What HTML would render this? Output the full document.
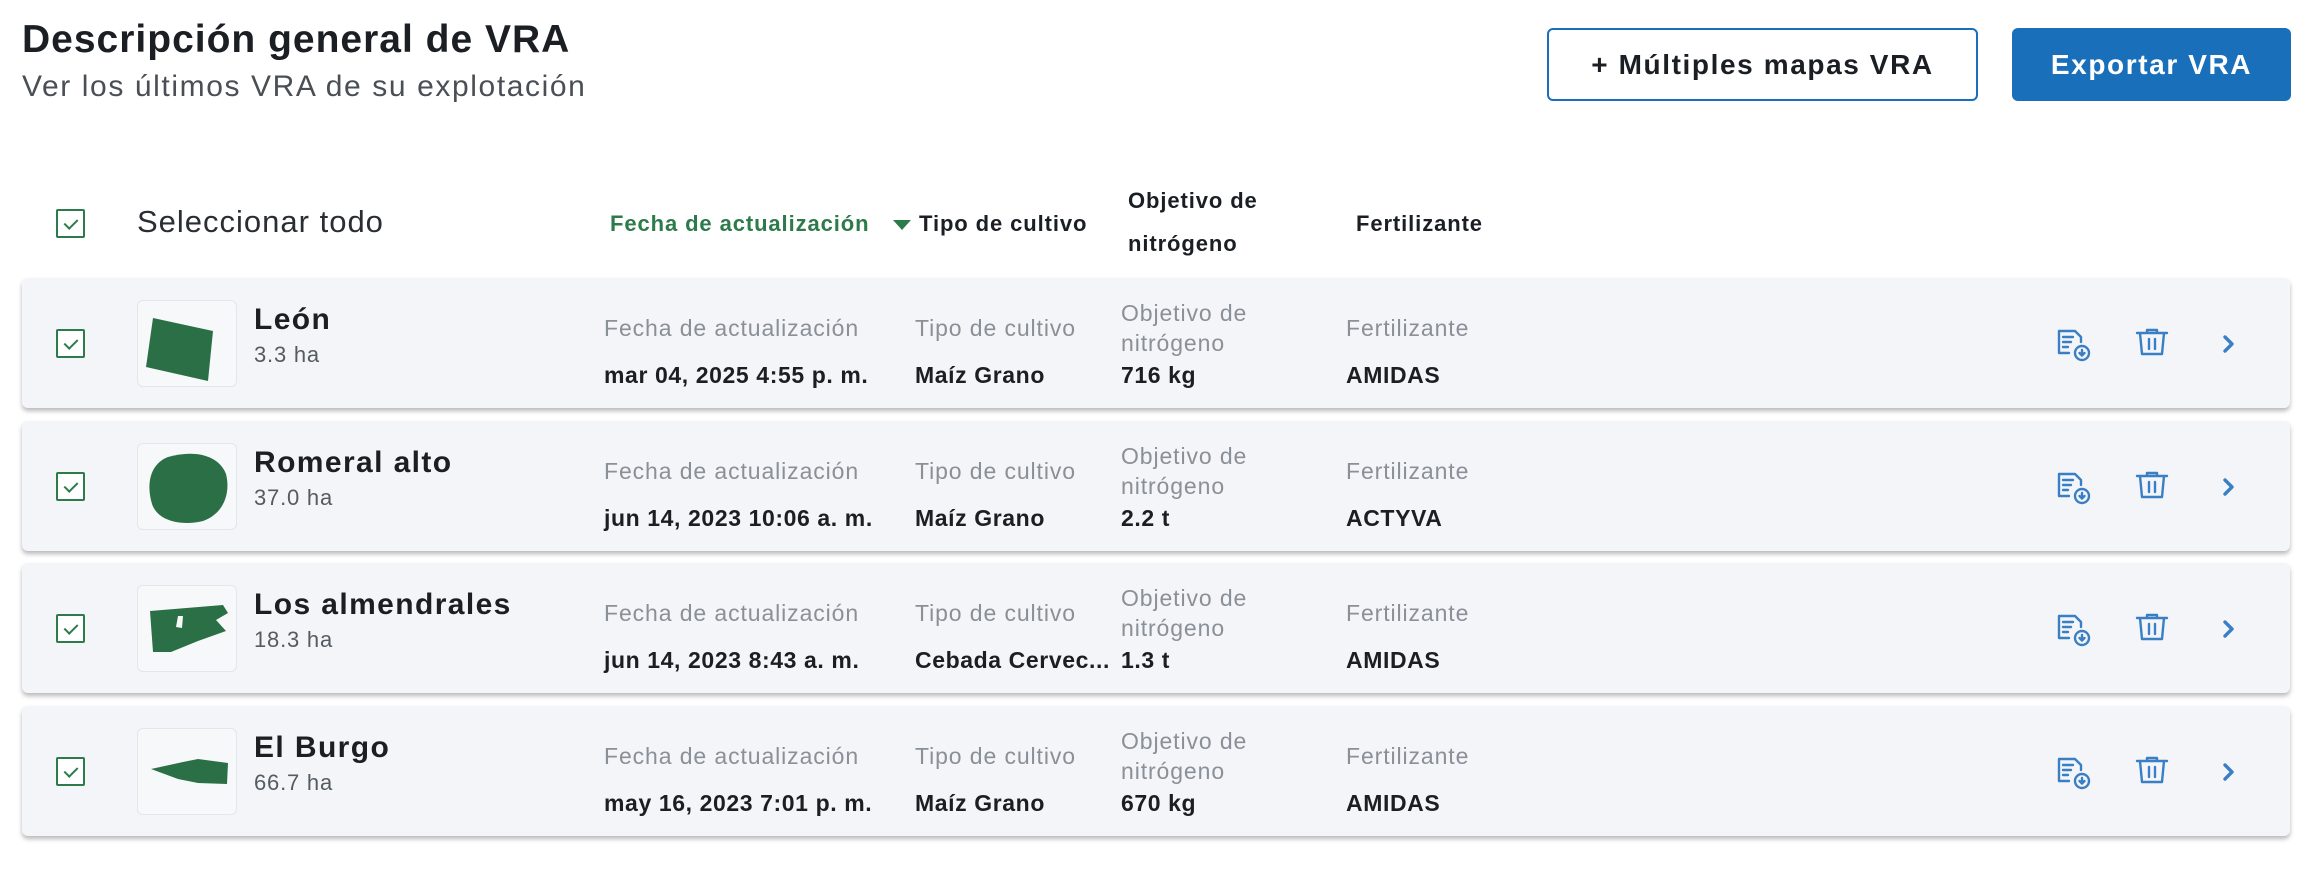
<!DOCTYPE html>
<html><head><meta charset="utf-8"><style>
*{box-sizing:border-box;margin:0;padding:0}
body{width:2306px;height:874px;background:#fff;font-family:"Liberation Sans",sans-serif;color:#1b1f24;position:relative;overflow:hidden}
.a{position:absolute;white-space:nowrap}
.title{left:22px;top:18px;font-size:39px;font-weight:bold;letter-spacing:1px}
.sub{left:22px;top:70px;font-size:30px;color:#4a4f55;letter-spacing:1.6px}
.btn{position:absolute;top:28px;height:73px;border-radius:6px;font-size:28px;font-weight:bold;display:flex;align-items:center;justify-content:center;letter-spacing:1.6px}
.b1{left:1547px;width:431px;border:2px solid #1a6fba;color:#1b1f24;background:#fff}
.b2{left:2012px;width:279px;background:#1a6fba;color:#fff}
.cb{position:absolute;width:29px;height:29px;border:2px solid #2d7a4a;border-radius:2px;background:#fff}
.cb:after{content:"";position:absolute;left:9px;top:5px;width:6px;height:11px;border:solid #2d7a4a;border-width:0 2px 2px 0;transform:rotate(45deg)}
.hd{font-size:22px;font-weight:bold;letter-spacing:0.9px}
.card{position:absolute;left:22px;width:2268px;height:130px;background:#f3f5f8;border-radius:6px;box-shadow:0 3px 5px rgba(0,0,0,.28)}
.thumb{position:absolute;left:115px;top:22px;width:100px;height:87px;background:#f7f8fa;border:1px solid #e3e6ea;border-radius:6px}
.nm{left:232px;top:25px;font-size:30px;font-weight:bold;letter-spacing:1.4px}
.ha{left:232px;top:64px;font-size:22px;color:#555b62;letter-spacing:0.8px}
.lb{font-size:23px;color:#8a9097;letter-spacing:0.9px}
.vl{font-size:23px;font-weight:bold;top:84px;letter-spacing:0.6px}
</style></head><body>
<div class="a title">Descripción general de VRA</div>
<div class="a sub">Ver los últimos VRA de su explotación</div>
<div class="btn b1">+ Múltiples mapas VRA</div>
<div class="btn b2">Exportar VRA</div>

<div class="cb" style="left:56px;top:209px"></div>
<div class="a" style="left:137px;top:204px;font-size:31px;color:#2a2e33;letter-spacing:1px">Seleccionar todo</div>
<div class="a hd" style="left:610px;top:211px;color:#2d7a4a">Fecha de actualización</div>
<svg class="a" style="left:892px;top:219px" width="20" height="12"><path d="M1 1h18l-9 10z" fill="#2d7a4a"/></svg>
<div class="a hd" style="left:919px;top:211px">Tipo de cultivo</div>
<div class="a hd" style="left:1128px;top:188px">Objetivo de</div>
<div class="a hd" style="left:1128px;top:231px">nitrógeno</div>
<div class="a hd" style="left:1356px;top:211px">Fertilizante</div>

<div class="card" style="top:278px">
<div class="cb" style="left:34px;top:51px"></div>
<div class="thumb"><svg width="100" height="87"><path d="M15 17L75 30L70 80L8 66Z" fill="#2b6f46"/></svg></div>
<div class="a nm">León</div><div class="a ha">3.3 ha</div>
<div class="a lb" style="left:582px;top:37px">Fecha de actualización</div><div class="a vl" style="left:582px">mar 04, 2025 4:55 p. m.</div>
<div class="a lb" style="left:893px;top:37px">Tipo de cultivo</div><div class="a vl" style="left:893px">Maíz Grano</div>
<div class="a lb" style="left:1099px;top:22px">Objetivo de</div><div class="a lb" style="left:1099px;top:52px">nitrógeno</div><div class="a vl" style="left:1099px">716 kg</div>
<div class="a lb" style="left:1324px;top:37px">Fertilizante</div><div class="a vl" style="left:1324px">AMIDAS</div>
</div>
<div class="card" style="top:421px">
<div class="cb" style="left:34px;top:51px"></div>
<div class="thumb"><svg width="100" height="87"><path d="M30 13C55 6 80 10 88 30C93 50 85 70 65 77C45 82 20 78 14 60C8 40 12 20 30 13Z" fill="#2b6f46"/></svg></div>
<div class="a nm">Romeral alto</div><div class="a ha">37.0 ha</div>
<div class="a lb" style="left:582px;top:37px">Fecha de actualización</div><div class="a vl" style="left:582px">jun 14, 2023 10:06 a. m.</div>
<div class="a lb" style="left:893px;top:37px">Tipo de cultivo</div><div class="a vl" style="left:893px">Maíz Grano</div>
<div class="a lb" style="left:1099px;top:22px">Objetivo de</div><div class="a lb" style="left:1099px;top:52px">nitrógeno</div><div class="a vl" style="left:1099px">2.2 t</div>
<div class="a lb" style="left:1324px;top:37px">Fertilizante</div><div class="a vl" style="left:1324px">ACTYVA</div>
</div>
<div class="card" style="top:563px">
<div class="cb" style="left:34px;top:51px"></div>
<div class="thumb"><svg width="100" height="87"><path d="M12 25L85 19L90 27L78 34L88 45L60 55L33 66L15 66Z M40 30L38 41L44 42L45 30Z" fill="#2b6f46" fill-rule="evenodd"/></svg></div>
<div class="a nm">Los almendrales</div><div class="a ha">18.3 ha</div>
<div class="a lb" style="left:582px;top:37px">Fecha de actualización</div><div class="a vl" style="left:582px">jun 14, 2023 8:43 a. m.</div>
<div class="a lb" style="left:893px;top:37px">Tipo de cultivo</div><div class="a vl" style="left:893px">Cebada Cervec...</div>
<div class="a lb" style="left:1099px;top:22px">Objetivo de</div><div class="a lb" style="left:1099px;top:52px">nitrógeno</div><div class="a vl" style="left:1099px">1.3 t</div>
<div class="a lb" style="left:1324px;top:37px">Fertilizante</div><div class="a vl" style="left:1324px">AMIDAS</div>
</div>
<div class="card" style="top:706px">
<div class="cb" style="left:34px;top:51px"></div>
<div class="thumb"><svg width="100" height="87"><path d="M13 40L45 33L60 30L90 34L89 55L60 54L40 50Z" fill="#2b6f46"/></svg></div>
<div class="a nm">El Burgo</div><div class="a ha">66.7 ha</div>
<div class="a lb" style="left:582px;top:37px">Fecha de actualización</div><div class="a vl" style="left:582px">may 16, 2023 7:01 p. m.</div>
<div class="a lb" style="left:893px;top:37px">Tipo de cultivo</div><div class="a vl" style="left:893px">Maíz Grano</div>
<div class="a lb" style="left:1099px;top:22px">Objetivo de</div><div class="a lb" style="left:1099px;top:52px">nitrógeno</div><div class="a vl" style="left:1099px">670 kg</div>
<div class="a lb" style="left:1324px;top:37px">Fertilizante</div><div class="a vl" style="left:1324px">AMIDAS</div>
</div>

<svg width="0" height="0" style="position:absolute"><defs>
<g id="ic" fill="none" stroke="#3a7fc4" stroke-width="2.4" stroke-linecap="round" stroke-linejoin="round">
<path d="M4 24V4h16l6 6v5M4 24v2h10"/><path d="M8 10h10M8 15h8M8 20h5"/><circle cx="27" cy="26" r="7"/><path d="M27 23v5M24.5 26l2.5 2.5 2.5-2.5"/>
<g transform="translate(82 0)"><path d="M0 6h30M10 6V3h10v3M3 6l2 21h20l2-21M12 12v10M18 12v10"/></g>
<g transform="translate(170 10)" stroke-width="3.4"><path d="M0 0l7 7-7 7"/></g>
</g></defs></svg>
<svg class="a" style="left:2055px;top:327px" width="200" height="36"><use href="#ic"/></svg>
<svg class="a" style="left:2055px;top:470px" width="200" height="36"><use href="#ic"/></svg>
<svg class="a" style="left:2055px;top:612px" width="200" height="36"><use href="#ic"/></svg>
<svg class="a" style="left:2055px;top:755px" width="200" height="36"><use href="#ic"/></svg>
</body></html>
